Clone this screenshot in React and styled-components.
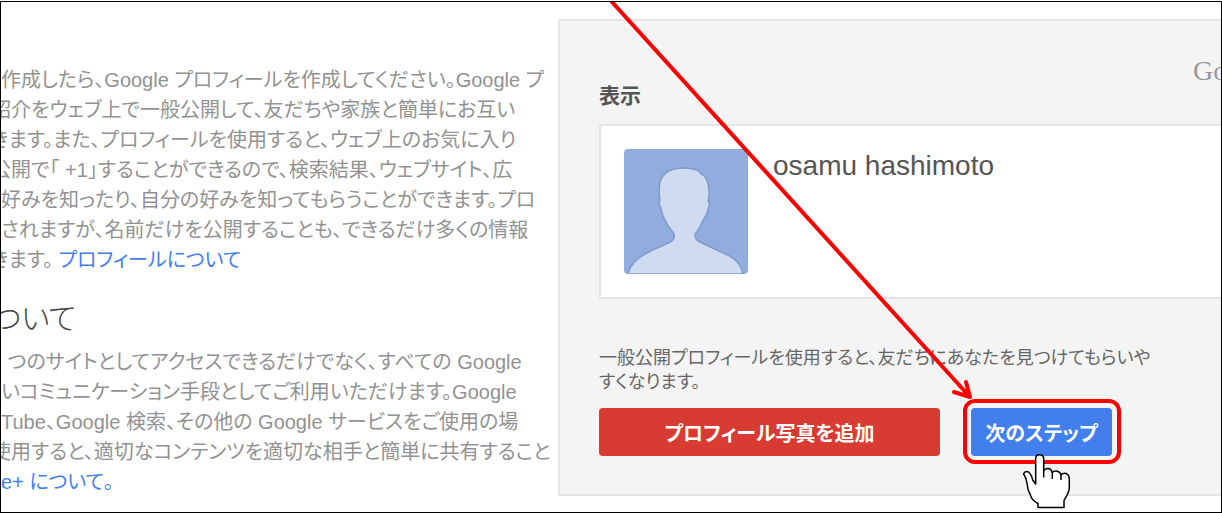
import React from 'react';
import styled, { createGlobalStyle } from 'styled-components';

const GlobalStyle = createGlobalStyle`
  *, *::before, *::after {
    box-sizing: border-box;
  }

  body {
    margin: 0;
    padding-top: 1px;
    background: #fff;
    font-family: "Liberation Sans", "Noto Sans CJK JP", sans-serif;
    font-feature-settings: "palt";
  }
`;

const Page = styled.div`
  position: relative;
  display: grid;
  grid-template-columns: minmax(0, 557px) minmax(0, 1fr);
  align-items: start;
  min-height: calc(100vh - 1px);
  padding: 17px 0 15px;
  border: 1px solid #000;
  overflow: hidden;
`;

const Article = styled.main`
  padding-top: 46px;
  overflow: hidden;
`;

const Paragraph = styled.p`
  margin: 0;
  color: #929292;
  font-size: 20px;
  line-height: 30px;
`;

const Line = styled.span`
  display: block;
  margin-left: ${props => (props.$cut ? '-10px' : '0')};
  white-space: nowrap;
`;

const Heading = styled.h2`
  margin: 24px 0 8px -8px;
  color: #444;
  font-size: 30px;
  font-weight: 300;
  line-height: 40px;
`;

const Link = styled.a`
  color: #427fed;
  text-decoration: none;
`;

const Panel = styled.aside`
  padding: 24px 0 38px 39px;
  background: #f4f4f4;
  border: 2px solid #e5e5e5;
  border-right: 0;
`;

const PanelHeader = styled.header`
  display: grid;
  grid-template-columns: 1fr 28px;
  height: 79px;
`;

const PanelTitle = styled.h3`
  align-self: end;
  margin: 0;
  padding-bottom: 12px;
  color: #555;
  font-size: 21px;
  line-height: 32px;
`;

const Wordmark = styled.span`
  padding-top: 8px;
  color: #999;
  font-family: "Liberation Serif", serif;
  font-size: 28px;
  line-height: 36px;
`;

const Card = styled.section`
  display: flex;
  gap: 25px;
  padding: 23px;
  background: #fff;
  border: 2px solid #e5e5e5;
  border-right: 0;
`;

const Avatar = styled.svg`
  flex: none;
  width: 124px;
  height: 125px;
`;

const Name = styled.div`
  color: #555;
  font-size: 28px;
  line-height: 34px;
`;

const Note = styled.p`
  margin: 47px 0 14px;
  color: #666;
  font-size: 18px;
  line-height: 24px;
`;

const NoteLine = styled.span`
  display: block;
`;

const Actions = styled.div`
  display: flex;
  align-items: center;
  gap: 31px;
`;

const Button = styled.button`
  height: 48px;
  padding: 0;
  flex: 0 1 ${props => props.$width};
  color: #fff;
  background: ${props => props.$color};
  border: 0;
  border-radius: 4px;
  font: inherit;
  font-feature-settings: inherit;
  font-size: 20px;
  font-weight: 700;
  white-space: nowrap;
  cursor: pointer;
`;

const Target = styled.div`
  position: relative;
  display: flex;
  flex: 0 0 141px;

  &::after {
    content: '';
    position: absolute;
    inset: -9px -9px -8px -8px;
    border: 4px solid #fe0000;
    border-radius: 12px;
    pointer-events: none;
  }
`;

const Pointer = styled.svg`
  position: absolute;
  z-index: 1;
  top: 45px;
  left: 50px;
  width: 52px;
  height: 56px;
`;

const Arrow = styled.svg`
  position: absolute;
  top: 0;
  left: 0;
  width: 1220px;
  height: 510px;
  pointer-events: none;
`;

const Silhouette = () => (
  <Avatar viewBox="0 0 124 125" aria-hidden="true">
    <rect width="124" height="125" rx="4" fill="#91addd" />
    <path
      d="M4 125C6 116 14 108 25 103C34 98 42 96 48 92Q51 90 50 85C46 80 42 74 39 67C38 63 37 59 36 57Q34 54 36 52C35 45 35 38 36 33C39 23 49 19 60 19C66 19 71 20 75 22L77 25C80 26 82 28 83 32C85 36 86 46 84 52Q86 53 85 57C84 62 82 68 79 71C77 76 75 81 71 85Q71 90 74 92L99 104C110 108 117 115 119 125Z"
      fill="#cfdbf1"
      stroke="#7f9acb"
      strokeWidth="1.5"
    />
  </Avatar>
);

const Hand = () => (
  <Pointer viewBox="0 0 52 56" aria-hidden="true">
    <path
      d="M17 54.5V50.5C12 48 10 45 9.5 42C7 38 6.5 36 6.3 32C5.5 27 5 24 2.5 21Q4 17.5 7.5 19C10 21 11 24 11.7 27L14.7 31V5C15 0.5 22 0.5 22.7 5V18C25 14 30 15 31.3 19.5C34 17 39 18 40 22C43 19 47.5 20 48.3 25V35C48 40 45 44 43 47.5V54.5Z"
      fill="#fffffd"
      stroke="#000"
      strokeWidth="1.5"
      strokeLinejoin="round"
    />
    <path d="M22.7 17V24.5M31.3 19V26M40 21V27" fill="none" stroke="#000" strokeWidth="1.5" />
  </Pointer>
);

function App() {
  return (
    <>
      <GlobalStyle />
      <Page>
        <Article>
          <Paragraph>
            <Line>作成したら、Google プロフィールを作成してください。Google プ</Line>
            <Line $cut>紹介をウェブ上で一般公開して、友だちや家族と簡単にお互い</Line>
            <Line $cut>きます。また、プロフィールを使用すると、ウェブ上のお気に入り</Line>
            <Line $cut>公開で「 +1」することができるので、検索結果、ウェブサイト、広</Line>
            <Line>好みを知ったり、自分の好みを知ってもらうことができます。プロ</Line>
            <Line>されますが、名前だけを公開することも、できるだけ多くの情報</Line>
            <Line $cut>きます。 <Link href="#profile">プロフィールについて</Link></Line>
          </Paragraph>
          <Heading>ついて</Heading>
          <Paragraph>
            <Line $cut>1 つのサイトとしてアクセスできるだけでなく、すべての Google</Line>
            <Line>いコミュニケーション手段としてご利用いただけます。Google</Line>
            <Line>Tube、Google 検索、その他の Google サービスをご使用の場</Line>
            <Line $cut>使用すると、適切なコンテンツを適切な相手と簡単に共有すること</Line>
            <Line><Link href="#plus">e+ について。</Link></Line>
          </Paragraph>
        </Article>
        <Panel>
          <PanelHeader>
            <PanelTitle>表示</PanelTitle>
            <Wordmark>Go</Wordmark>
          </PanelHeader>
          <Card>
            <Silhouette />
            <Name>osamu hashimoto</Name>
          </Card>
          <Note>
            <NoteLine>一般公開プロフィールを使用すると、友だちにあなたを見つけてもらいや</NoteLine>
            <NoteLine>すくなります。</NoteLine>
          </Note>
          <Actions>
            <Button type="button" $width="341px" $color="#d73b32">プロフィール写真を追加</Button>
            <Target>
              <Button type="button" $width="100%" $color="#427fed">次のステップ</Button>
              <Hand />
            </Target>
          </Actions>
        </Panel>
        <Arrow viewBox="0 0 1220 510" aria-hidden="true">
          <path
            d="M611 0L969 395M953 390L969 395L965 380"
            fill="none"
            stroke="#fe0000"
            strokeWidth="4"
            strokeLinecap="round"
            strokeLinejoin="round"
          />
        </Arrow>
      </Page>
    </>
  );
}

export default App;
